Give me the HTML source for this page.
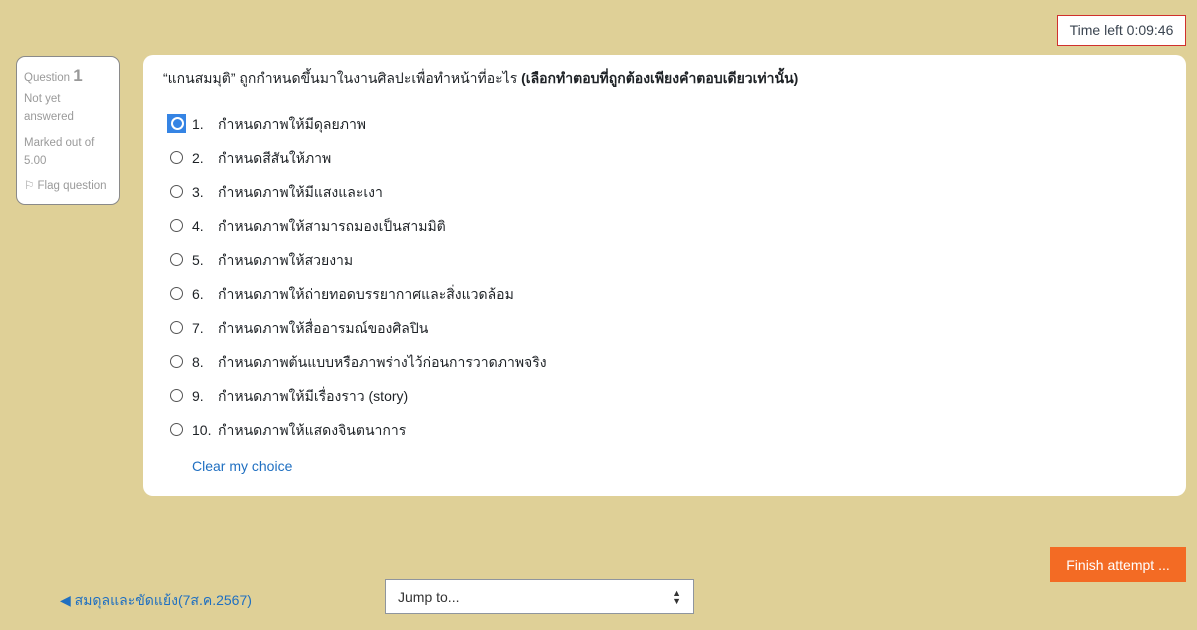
<!DOCTYPE html>
<html><head><meta charset="utf-8"><style>
body{margin:0;width:1197px;height:630px;background:#dfd097;font-family:"Liberation Sans",sans-serif;position:relative;overflow:hidden;color:#1d2125}
.abs{position:absolute}
.info{left:16px;top:56px;width:104px;height:149px;background:#fff;border:1px solid #8a8a8a;border-radius:9px;box-sizing:border-box;padding:10px 7px;font-size:11.5px;color:#9a9a9a;line-height:18px}
.card{left:143px;top:55px;width:1043px;height:441px;background:#fff;border-radius:10px}
.q{left:163px;top:68px;font-size:14px}
.opt{position:absolute;left:170px;font-size:14px;height:20px;line-height:20px}
.opt .r{position:absolute;left:0;top:3px;width:11px;height:11px;border:1px solid #555;border-radius:50%}
.opt .n{position:absolute;left:22px}
.opt .t{position:absolute;left:48px;white-space:nowrap}
</style></head><body>
<div class="abs" style="left:1057px;top:15px;width:129px;height:31px;border:1px solid #d0312d;background:#fff;box-sizing:border-box;font-size:14px;line-height:29px;text-align:center;color:#3a4450">Time left 0:09:46</div>
<div class="abs info">Question <b style="font-size:17px;color:#999">1</b><div style="margin-top:3px">Not yet<br>answered</div><div style="margin-top:8px">Marked out of<br>5.00</div><div style="margin-top:7px">⚐ Flag question</div></div>
<div class="abs card"></div>
<div class="abs q">“แกนสมมุติ” ถูกกำหนดขึ้นมาในงานศิลปะเพื่อทำหน้าที่อะไร <b>(เลือกทำตอบที่ถูกต้องเพียงคำตอบเดียวเท่านั้น)</b></div>
<div class="opt" style="top:114px"><span class="abs" style="left:-3px;top:0;width:19px;height:19px;background:#3584e4"></span><span class="r" style="left:1px;top:3px;border:2px solid #fff;width:9px;height:9px;background:#3584e4"></span><span class="n">1.</span><span class="t">กำหนดภาพให้มีดุลยภาพ</span></div>
<div class="opt" style="top:148px"><span class="r"></span><span class="n">2.</span><span class="t">กำหนดสีสันให้ภาพ</span></div>
<div class="opt" style="top:182px"><span class="r"></span><span class="n">3.</span><span class="t">กำหนดภาพให้มีแสงและเงา</span></div>
<div class="opt" style="top:216px"><span class="r"></span><span class="n">4.</span><span class="t">กำหนดภาพให้สามารถมองเป็นสามมิติ</span></div>
<div class="opt" style="top:250px"><span class="r"></span><span class="n">5.</span><span class="t">กำหนดภาพให้สวยงาม</span></div>
<div class="opt" style="top:284px"><span class="r"></span><span class="n">6.</span><span class="t">กำหนดภาพให้ถ่ายทอดบรรยากาศและสิ่งแวดล้อม</span></div>
<div class="opt" style="top:318px"><span class="r"></span><span class="n">7.</span><span class="t">กำหนดภาพให้สื่ออารมณ์ของศิลปิน</span></div>
<div class="opt" style="top:352px"><span class="r"></span><span class="n">8.</span><span class="t">กำหนดภาพต้นแบบหรือภาพร่างไว้ก่อนการวาดภาพจริง</span></div>
<div class="opt" style="top:386px"><span class="r"></span><span class="n">9.</span><span class="t">กำหนดภาพให้มีเรื่องราว (story)</span></div>
<div class="opt" style="top:420px"><span class="r"></span><span class="n">10.</span><span class="t">กำหนดภาพให้แสดงจินตนาการ</span></div>
<div class="abs" style="left:192px;top:458px;font-size:14px;color:#1f6fc1">Clear my choice</div>
<div class="abs" style="left:1050px;top:547px;width:136px;height:35px;background:#f36b24;color:#fff;font-size:14px;line-height:37px;text-align:center">Finish attempt ...</div>
<div class="abs" style="left:60px;top:590px;font-size:14px;color:#1f6fc1">◀ สมดุลและขัดแย้ง(7ส.ค.2567)</div>
<div class="abs" style="left:385px;top:579px;width:309px;height:35px;border:1px solid #8f959e;background:#fff;box-sizing:border-box;font-size:14px;line-height:35px;padding-left:12px;color:#333">Jump to...<span class="abs" style="right:12px;top:0;font-size:9px;line-height:8px;padding-top:9px">▲<br>▼</span></div>
</body></html>
